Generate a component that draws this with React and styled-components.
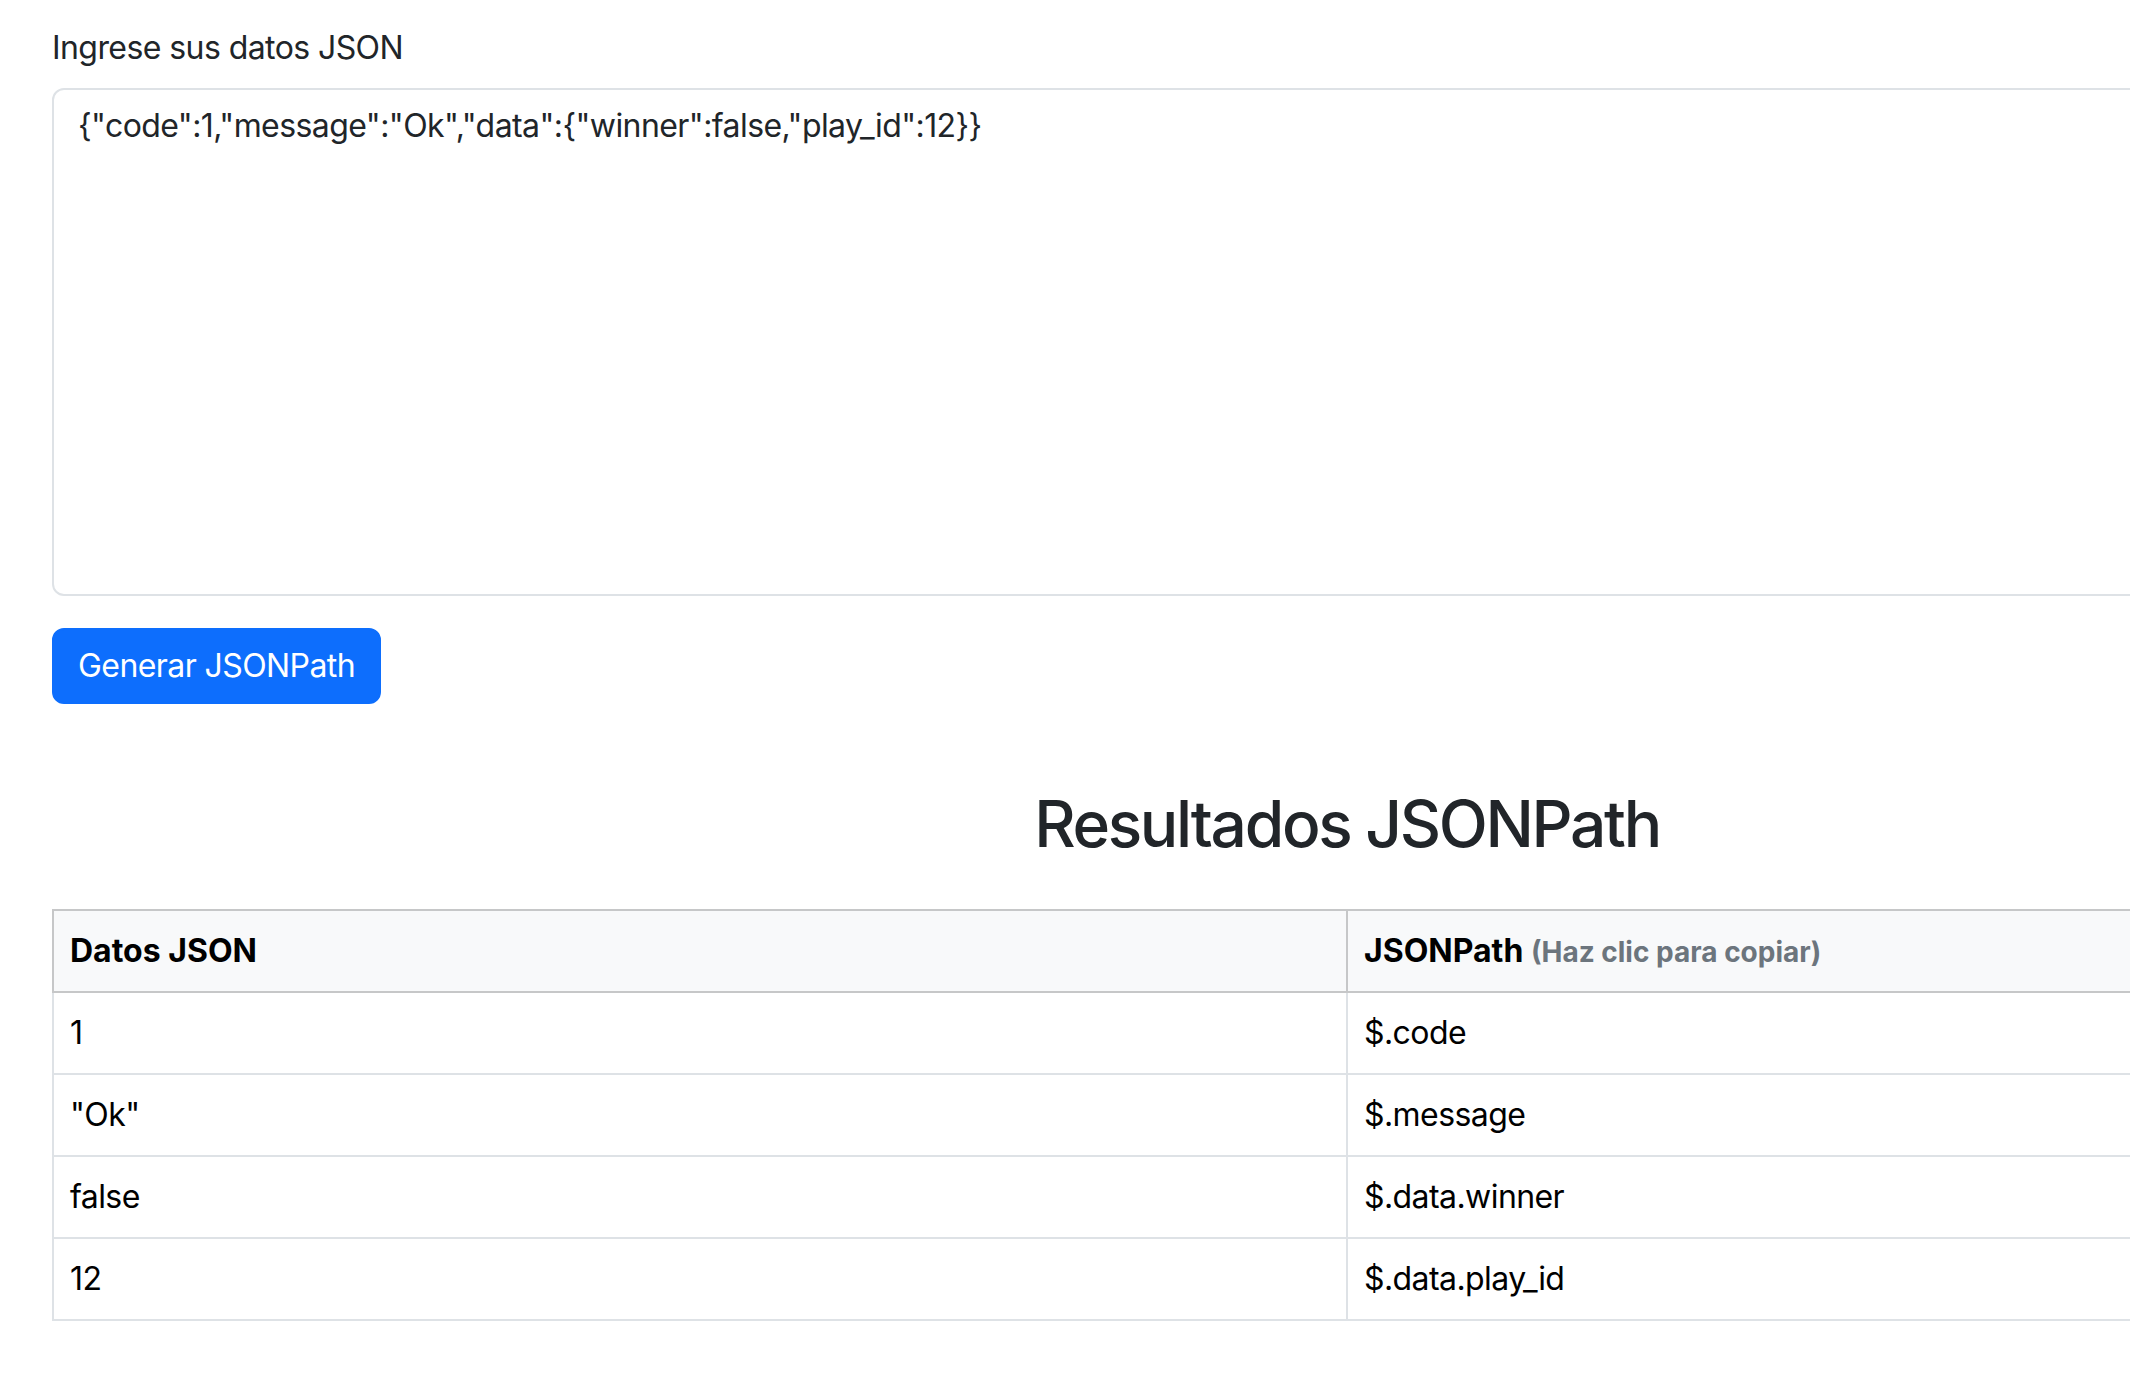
import React from 'react';
import styled, { createGlobalStyle } from 'styled-components';

const GlobalStyle = createGlobalStyle`
  html, body {
    margin: 0;
    padding: 0;
    overflow: hidden;
    background: #fff;
  }
  body {
    font-family: Inter, "Noto Sans", sans-serif;
    font-size: 32px;
    line-height: 1.5;
    letter-spacing: -0.018em;
    color: #212529;
  }
  *, *::before, *::after {
    box-sizing: border-box;
  }
`;

const rows = [
  { value: '1', path: '$.code' },
  { value: '"Ok"', path: '$.message' },
  { value: 'false', path: '$.data.winner' },
  { value: '12', path: '$.data.play_id' },
];

const App = () => {
  return (
    <>
      <GlobalStyle />
      <Container>
        <FormGroup>
          <Label htmlFor="jsonInput">Ingrese sus datos JSON</Label>
          <JsonInput
            id="jsonInput"
            rows={10}
            defaultValue={'{"code":1,"message":"Ok","data":{"winner":false,"play_id":12}}'}
          />
        </FormGroup>
        <PrimaryButton type="button">Generar JSONPath</PrimaryButton>

        <Title>Resultados JSONPath</Title>

        <ResultTable>
          <thead>
            <tr>
              <HeadCell>Datos JSON</HeadCell>
              <HeadCell>
                JSONPath <Hint>(Haz clic para copiar)</Hint>
              </HeadCell>
            </tr>
          </thead>
          <tbody>
            {rows.map((row) => (
              <tr key={row.path}>
                <Cell>{row.value}</Cell>
                <Cell>{row.path}</Cell>
              </tr>
            ))}
          </tbody>
        </ResultTable>
      </Container>
    </>
  );
};

const Container = styled.div`
  width: 2642px;
  padding: 24px 0 64px 52px;
`;

const FormGroup = styled.div`
  margin-bottom: 32px;
`;

const Label = styled.label`
  display: block;
  margin-bottom: 16px;
  font-size: 32px;
  line-height: 48px;
`;

const JsonInput = styled.textarea`
  display: block;
  width: 100%;
  padding: 12px 24px;
  font-family: inherit;
  font-size: 32px;
  line-height: 48px;
  letter-spacing: -0.018em;
  color: #212529;
  background: #fff;
  border: 2px solid #dee2e6;
  border-radius: 12px;
  resize: vertical;
  outline: none;
`;

const PrimaryButton = styled.button`
  display: inline-block;
  padding: 12px 24px;
  font-family: inherit;
  font-size: 32px;
  line-height: 48px;
  letter-spacing: -0.018em;
  color: #fff;
  background-color: #0d6efd;
  border: 2px solid #0d6efd;
  border-radius: 12px;
  cursor: pointer;
`;

const Title = styled.h2`
  margin: 82px 0 46px;
  text-align: center;
  font-size: 64px;
  font-weight: 500;
  line-height: 1.2;
  letter-spacing: -0.036em;
  color: #212529;
`;

const ResultTable = styled.table`
  width: 100%;
  table-layout: fixed;
  border-collapse: collapse;
  color: #000;
`;

const HeadCell = styled.th`
  padding: 16px;
  text-align: left;
  font-weight: 700;
  letter-spacing: 0;
  background-color: #f8f9fa;
  border: 2px solid #c6c7c8;
`;

const Cell = styled.td`
  padding: 16px;
  border: 2px solid #dee2e6;
`;

const Hint = styled.small`
  font-size: 28px;
  color: #6c757d;
`;

export default App;
